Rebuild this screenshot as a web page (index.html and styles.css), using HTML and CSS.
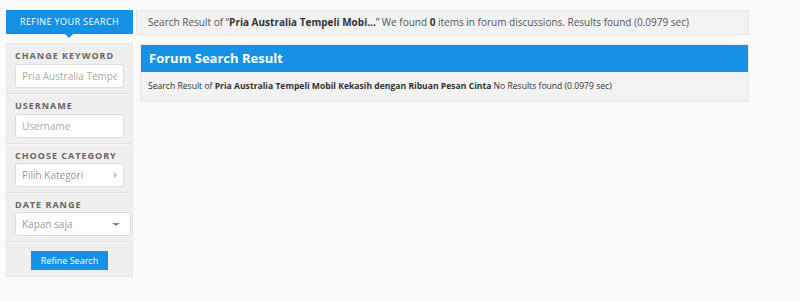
FILE: index.html
```html
<!DOCTYPE html>
<html lang="en">
<head>
    <meta charset="UTF-8">
    <meta name="viewport" content="width=device-width, initial-scale=1.0">
    <title>Search</title>
    <link rel="stylesheet" href="styles.css">
</head>
<body>
    <div class="page">
        <aside class="sidebar">
            <div class="tab">REFINE YOUR SEARCH</div>
            <div class="panel">
                <div class="field">
                    <label>CHANGE KEYWORD</label>
                    <input class="input" type="text" placeholder="Pria Australia Tempeli Mobil">
                </div>
                <div class="field">
                    <label>USERNAME</label>
                    <input class="input" type="text" placeholder="Username">
                </div>
                <div class="field">
                    <label>CHOOSE CATEGORY</label>
                    <div class="input select">
                        <span>Pilih Kategori</span>
                        <span class="arrow-right"></span>
                    </div>
                </div>
                <div class="field">
                    <label>DATE RANGE</label>
                    <div class="input select wide">
                        <span>Kapan saja</span>
                        <span class="arrow-down"></span>
                    </div>
                </div>
                <div class="actions">
                    <button>Refine Search</button>
                </div>
            </div>
        </aside>
        <main class="content">
            <div class="summary">
                Search Result of &ldquo;<b>Pria Australia Tempeli Mobi...</b>&rdquo; We found <b>0</b> items in forum discussions. Results found (0.0979 sec)
            </div>
            <section class="result">
                <h2>Forum Search Result</h2>
                <p>Search Result of <b>Pria Australia Tempeli Mobil Kekasih dengan Ribuan Pesan Cinta</b> No Results found (0.0979 sec)</p>
            </section>
        </main>
    </div>
</body>
</html>
```

FILE: styles.css
```css
body {
    margin: 0;
    background: #fafafa;
    font-family: 'Open Sans', sans-serif;
    color: #555;
}
.page {
    display: flex;
    align-items: flex-start;
    gap: 3px;
    padding: 10px 6px;
}
.sidebar {
    width: 127px;
    flex-shrink: 0;
}
.tab {
    position: relative;
    height: 24px;
    line-height: 24px;
    background: #1592e6;
    color: #fff;
    font-size: 9px;
    letter-spacing: 0.4px;
    text-align: center;
}
.tab::after {
    content: '';
    position: absolute;
    left: 59px;
    bottom: -4px;
    border-left: 4px solid transparent;
    border-right: 4px solid transparent;
    border-top: 4px solid #1592e6;
}
.panel {
    margin-top: 9px;
    background: #efefef;
    border: 1px solid #e9e9e9;
}
.field {
    padding: 6px 8px 5px 8px;
    border-bottom: 1px solid #e2e2e2;
    box-shadow: 0 1px 0 #f7f7f7;
}
.field label {
    display: block;
    font-size: 9px;
    font-weight: bold;
    letter-spacing: 1px;
    color: #666;
    line-height: 12px;
    margin-bottom: 1px;
}
.input {
    box-sizing: border-box;
    width: 109px;
    height: 24px;
    padding: 0 6px;
    border: 1px solid #dcdcdc;
    border-radius: 3px;
    background: #fff;
    font-family: 'Open Sans', sans-serif;
    font-size: 10px;
    color: #999;
    outline: none;
}
.input::placeholder {
    color: #aaa;
}
.select {
    display: flex;
    align-items: center;
    justify-content: space-between;
}
.select.wide {
    width: 116px;
}
.arrow-right {
    border-top: 3px solid transparent;
    border-bottom: 3px solid transparent;
    border-left: 3px solid #bbb;
}
.arrow-down {
    margin-right: 4px;
    border-left: 4px solid transparent;
    border-right: 4px solid transparent;
    border-top: 3px solid #888;
}
.actions {
    padding: 5px 0 6px;
    text-align: center;
}
.actions button {
    width: 77px;
    height: 19px;
    padding: 0;
    border: none;
    background: #1592e6;
    color: #fff;
    font-family: 'Open Sans', sans-serif;
    font-size: 9px;
}
.content {
    width: 613px;
}
.summary {
    box-sizing: border-box;
    height: 25px;
    line-height: 23px;
    padding: 0 11px;
    background: #f2f2f2;
    border: 1px solid #e6e6e6;
    font-size: 10px;
    white-space: nowrap;
}
.summary b {
    color: #333;
}
.result {
    margin: 9px 0 0 4px;
    background: #f2f2f2;
    border: 1px solid #ebebeb;
}
.result h2 {
    margin: 0;
    height: 27px;
    line-height: 27px;
    padding: 0 8px;
    background: #1592e6;
    color: #fff;
    font-size: 13px;
    font-weight: bold;
}
.result p {
    margin: 0;
    height: 29px;
    line-height: 29px;
    padding: 0 7px;
    font-size: 8.6px;
    color: #333;
}
```
